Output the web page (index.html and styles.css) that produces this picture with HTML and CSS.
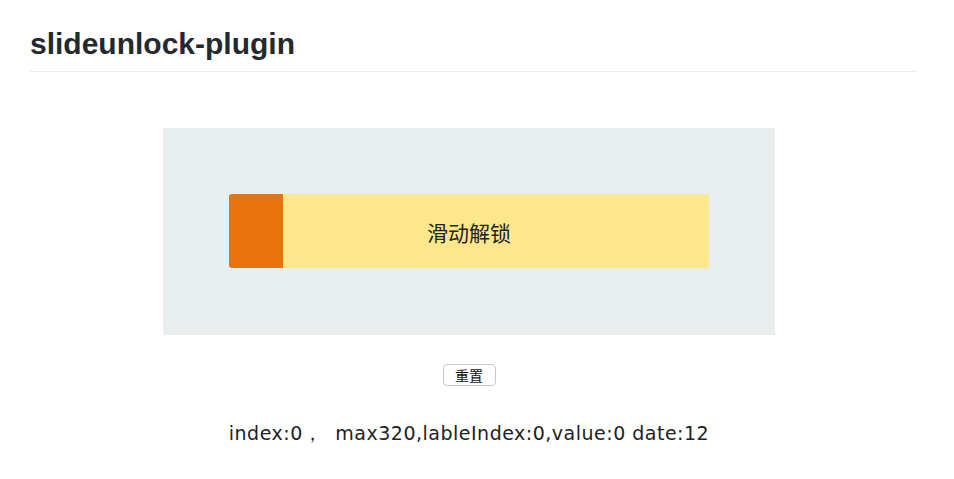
FILE: index.html
```html
<!DOCTYPE html>
<html>
<head>
<meta charset="utf-8">
<link rel="stylesheet" href="styles.css">
</head>
<body>
<div class="page">
  <h1 class="title">slideunlock-plugin</h1>
  <div class="demo">
    <div class="stage">
      <div class="slider">
        <div class="handle"></div>
        <span class="label">滑动解锁</span>
      </div>
    </div>
    <div class="actions"><button class="reset">重置</button></div>
    <p class="status">index:0，&nbsp;&nbsp;max320,lableIndex:0,value:0 date:12</p>
  </div>
</div>
</body>
</html>
```
FILE: styles.css
```css
html, body { margin: 0; padding: 0; background: #fff; }
.page { margin-left: 30px; width: 887px; padding-top: 25px; }
.title {
  margin: 0;
  font-family: "Liberation Sans", Arial, sans-serif;
  font-weight: bold;
  font-size: 30px;
  line-height: 38px;
  color: #24292e;
  padding-bottom: 8px;
  border-bottom: 1px solid #eaecef;
}
.demo { width: 878px; display: flex; flex-direction: column; align-items: center; padding-top: 56px; }
.stage { width: 480px; padding: 66px 66px 67px; background: #e8eded; }
.slider { position: relative; height: 74px; background: #fde78c; border-radius: 3px; display: flex; align-items: center; justify-content: center; }
.handle { position: absolute; left: 0; top: 0; width: 54px; height: 74px; background: #e8730c; border-radius: 3px 0 0 3px; }
.label { font-family: "Noto Sans CJK SC", sans-serif; font-size: 21px; line-height: 28px; color: #222; margin-top: 1px; }
.actions { display: flex; margin-top: 29px; }
.reset {
  font-family: "Noto Sans CJK SC", sans-serif;
  font-size: 14px;
  line-height: 17px;
  height: 22px;
  width: 53px;
  padding: 0;
  background: #fff;
  border: 1px solid #c8c8c8;
  border-radius: 4px;
  color: #111;
}
.status { margin: 35px 0 0; font-family: "DejaVu Sans", sans-serif; font-size: 19px; line-height: 24px; letter-spacing: 0.5px; color: #222; }
```
